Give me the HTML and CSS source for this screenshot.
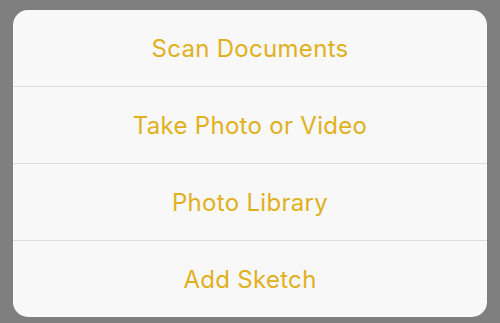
FILE: index.html
```html
<!DOCTYPE html>
<html>
<head>
<meta charset="utf-8">
<link rel="stylesheet" href="styles.css">
</head>
<body>
<div class="sheet">
  <div class="item">Scan Documents</div>
  <div class="item">Take Photo or Video</div>
  <div class="item">Photo Library</div>
  <div class="item">Add Sketch</div>
</div>
</body>
</html>
```

FILE: styles.css
```css
html, body {
  margin: 0;
  padding: 0;
  width: 500px;
  height: 323px;
  background: #7f7f7f;
  overflow: hidden;
}
body {
  padding: 10px 13px 0 13px;
  box-sizing: border-box;
}
.sheet {
  background: #f8f8f8;
  border-radius: 15px;
  overflow: hidden;
  display: flex;
  flex-direction: column;
}
.item {
  height: 76px;
  display: flex;
  align-items: center;
  justify-content: center;
  font-family: "Inter", "Liberation Sans", Arial, sans-serif;
  font-size: 24px;
  letter-spacing: 0.3px;
  color: #e0b021;
  border-top: 1px solid #dddddd;
}
.item:first-child {
  border-top: none;
}
```
